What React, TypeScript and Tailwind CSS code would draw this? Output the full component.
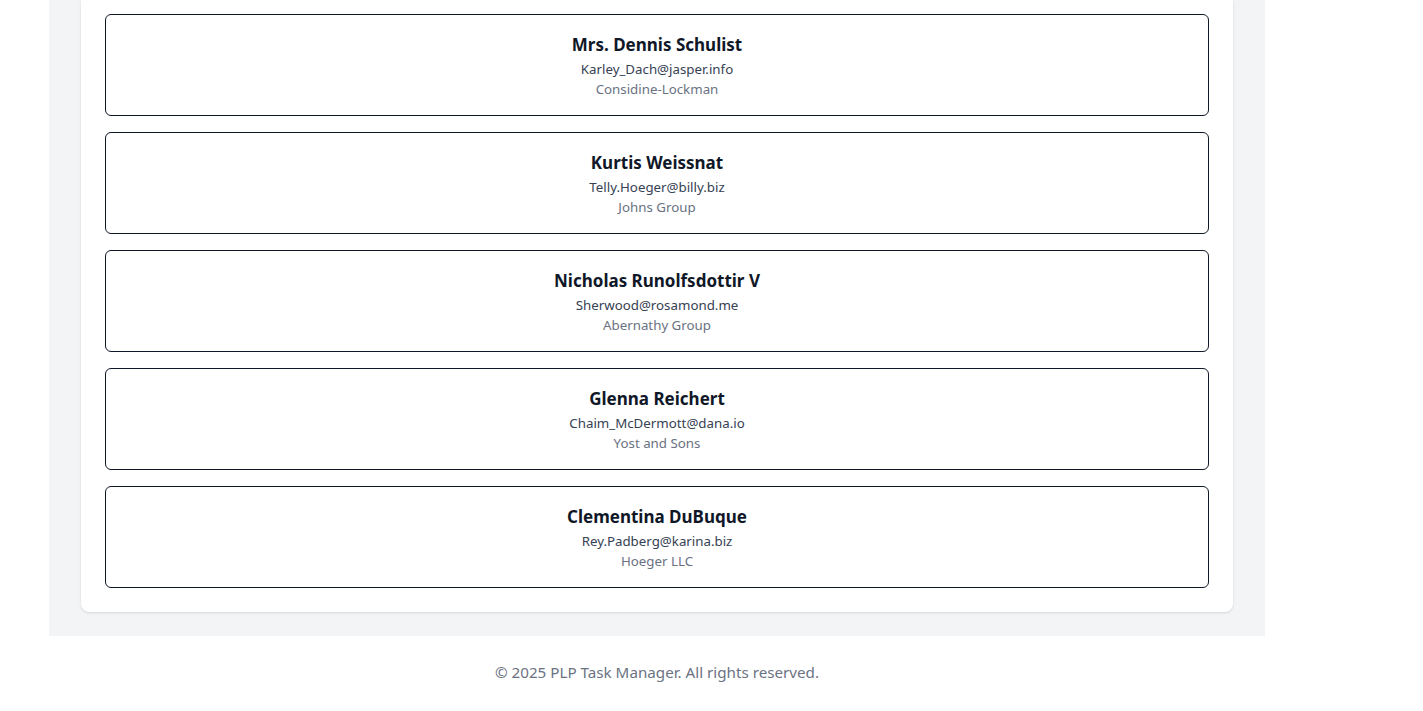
const users = [
  { name: 'Mrs. Dennis Schulist', email: 'Karley_Dach@jasper.info', company: 'Considine-Lockman' },
  { name: 'Kurtis Weissnat', email: 'Telly.Hoeger@billy.biz', company: 'Johns Group' },
  { name: 'Nicholas Runolfsdottir V', email: 'Sherwood@rosamond.me', company: 'Abernathy Group' },
  { name: 'Glenna Reichert', email: 'Chaim_McDermott@dana.io', company: 'Yost and Sons' },
  { name: 'Clementina DuBuque', email: 'Rey.Padberg@karina.biz', company: 'Hoeger LLC' },
];

function UserCard({ name, email, company }: { name: string; email: string; company: string }) {
  return (
    <div className="rounded-md border border-gray-900 bg-white p-4 text-center">
      <h3 className="text-[17px] font-bold leading-7 text-gray-900">{name}</h3>
      <p className="text-[13.3px] leading-5 text-gray-700">{email}</p>
      <p className="text-[13.3px] leading-5 text-gray-500">{company}</p>
    </div>
  );
}

export default function App() {
  return (
    <div className="min-h-screen bg-white font-['Noto_Sans',sans-serif]">
      <div className="ml-[49px] w-[1216px]">
        <main className="bg-gray-100 px-8 pb-6">
          <section className="rounded-b-lg bg-white px-6 pb-6 pt-[14px] shadow">
            <div className="flex flex-col gap-4">
              {users.map((u) => (
                <UserCard key={u.email} {...u} />
              ))}
            </div>
          </section>
        </main>
        <footer className="py-6 text-center text-[15.2px] leading-6 text-gray-500">
          © 2025 PLP Task Manager. All rights reserved.
        </footer>
      </div>
    </div>
  );
}
